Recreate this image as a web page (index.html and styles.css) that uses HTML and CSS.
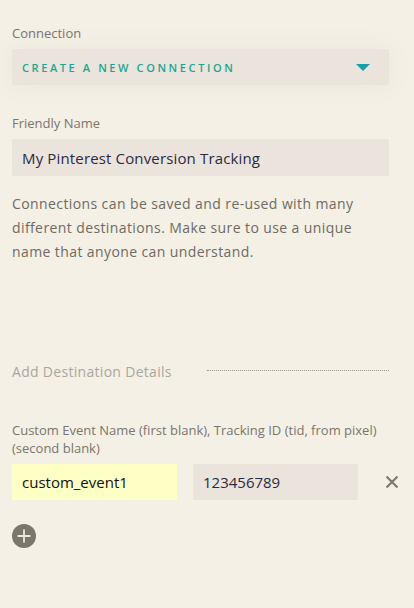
FILE: index.html
```html
<!DOCTYPE html>
<html>
<head>
<meta charset="utf-8">
<link rel="stylesheet" href="styles.css">
</head>
<body>
<div class="form">
  <div class="field">
    <div class="label">Connection</div>
    <div class="select">
      <span class="select-text">CREATE A NEW CONNECTION</span>
      <svg class="caret" width="14" height="8" viewBox="0 0 14 8"><path d="M0 0 H14 L7 7 Z" fill="#17a0a8"/></svg>
    </div>
  </div>
  <div class="field">
    <div class="label">Friendly Name</div>
    <div class="input">My Pinterest Conversion Tracking</div>
  </div>
  <p class="help">Connections can be saved and re-used with many different destinations. Make sure to use a unique name that anyone can understand.</p>
  <div class="section">
    <span class="section-title">Add Destination Details</span>
    <span class="section-line"></span>
  </div>
  <div class="label multi">Custom Event Name (first blank), Tracking ID (tid, from pixel) (second blank)</div>
  <div class="pair">
    <div class="pair-input yellow">custom_event1</div>
    <div class="pair-input">123456789</div>
    <svg class="remove" width="14" height="14" viewBox="0 0 14 14"><path d="M1.5 1.5 L12.5 12.5 M12.5 1.5 L1.5 12.5" stroke="#7b766c" stroke-width="2" fill="none"/></svg>
  </div>
  <div class="add">
    <svg width="24" height="24" viewBox="0 0 24 24"><circle cx="12" cy="12" r="12" fill="#7b766c"/><path d="M12 5.5 V18.5 M5.5 12 H18.5" stroke="#efe7d6" stroke-width="1.8"/></svg>
  </div>
</div>
</body>
</html>
```
FILE: styles.css
```css
html, body {
  margin: 0;
  padding: 0;
  background: #f4f0e6;
}
body {
  font-family: "Open Sans", "Lato", sans-serif;
  width: 414px;
  height: 608px;
  overflow: hidden;
}
* {
  box-sizing: border-box;
}
.form {
  padding: 25px 25px 0 12px;
  display: flex;
  flex-direction: column;
}
.field {
  display: flex;
  flex-direction: column;
}
.label {
  font-size: 13px;
  color: #7a756c;
  line-height: 16px;
  margin-bottom: 8px;
}
.select {
  height: 36px;
  background: #ebe4dd;
  border-radius: 2px;
  display: flex;
  align-items: center;
  justify-content: space-between;
  padding: 0 19px 0 10px;
  box-shadow: 0 0 24px rgba(120, 110, 90, 0.08);
  margin-bottom: 30px;
}
.select-text {
  color: #1aa691;
  font-size: 11px;
  letter-spacing: 2.6px;
  font-weight: 600;
}
.caret {
  display: block;
  margin-top: 1px;
}
.input {
  height: 37px;
  background: #ebe4dd;
  border-radius: 2px;
  display: flex;
  align-items: center;
  padding: 0 10px;
  font-size: 15px;
  letter-spacing: 0.15px;
  color: #2b2942;
}
.help {
  margin: 16px 0 0;
  font-size: 14px;
  letter-spacing: 0.4px;
  line-height: 24px;
  color: #6f6a62;
}
.section {
  margin-top: 98px;
  display: flex;
  align-items: center;
}
.section-title {
  font-size: 14px;
  letter-spacing: 0.3px;
  color: #aba69d;
  width: 195px;
}
.section-line {
  flex: 1;
  border-top: 1px dotted #9d978d;
  margin-top: -2px;
}
.multi {
  margin-top: 40px;
  line-height: 18px;
  margin-bottom: 7px;
}
.pair {
  display: flex;
  align-items: center;
  gap: 16px;
}
.pair-input {
  flex: none;
  width: 165px;
  height: 36px;
  background: #ebe4dd;
  border-radius: 2px;
  display: flex;
  align-items: center;
  padding: 0 10px;
  font-size: 15px;
  color: #2b2942;
}
.yellow {
  background: #fdffc4;
  color: #111;
  border-radius: 0;
}
.remove {
  flex: none;
  display: block;
  margin-left: 11px;
}
.add {
  margin-top: 24px;
  height: 24px;
}
.add svg {
  display: block;
}
```
